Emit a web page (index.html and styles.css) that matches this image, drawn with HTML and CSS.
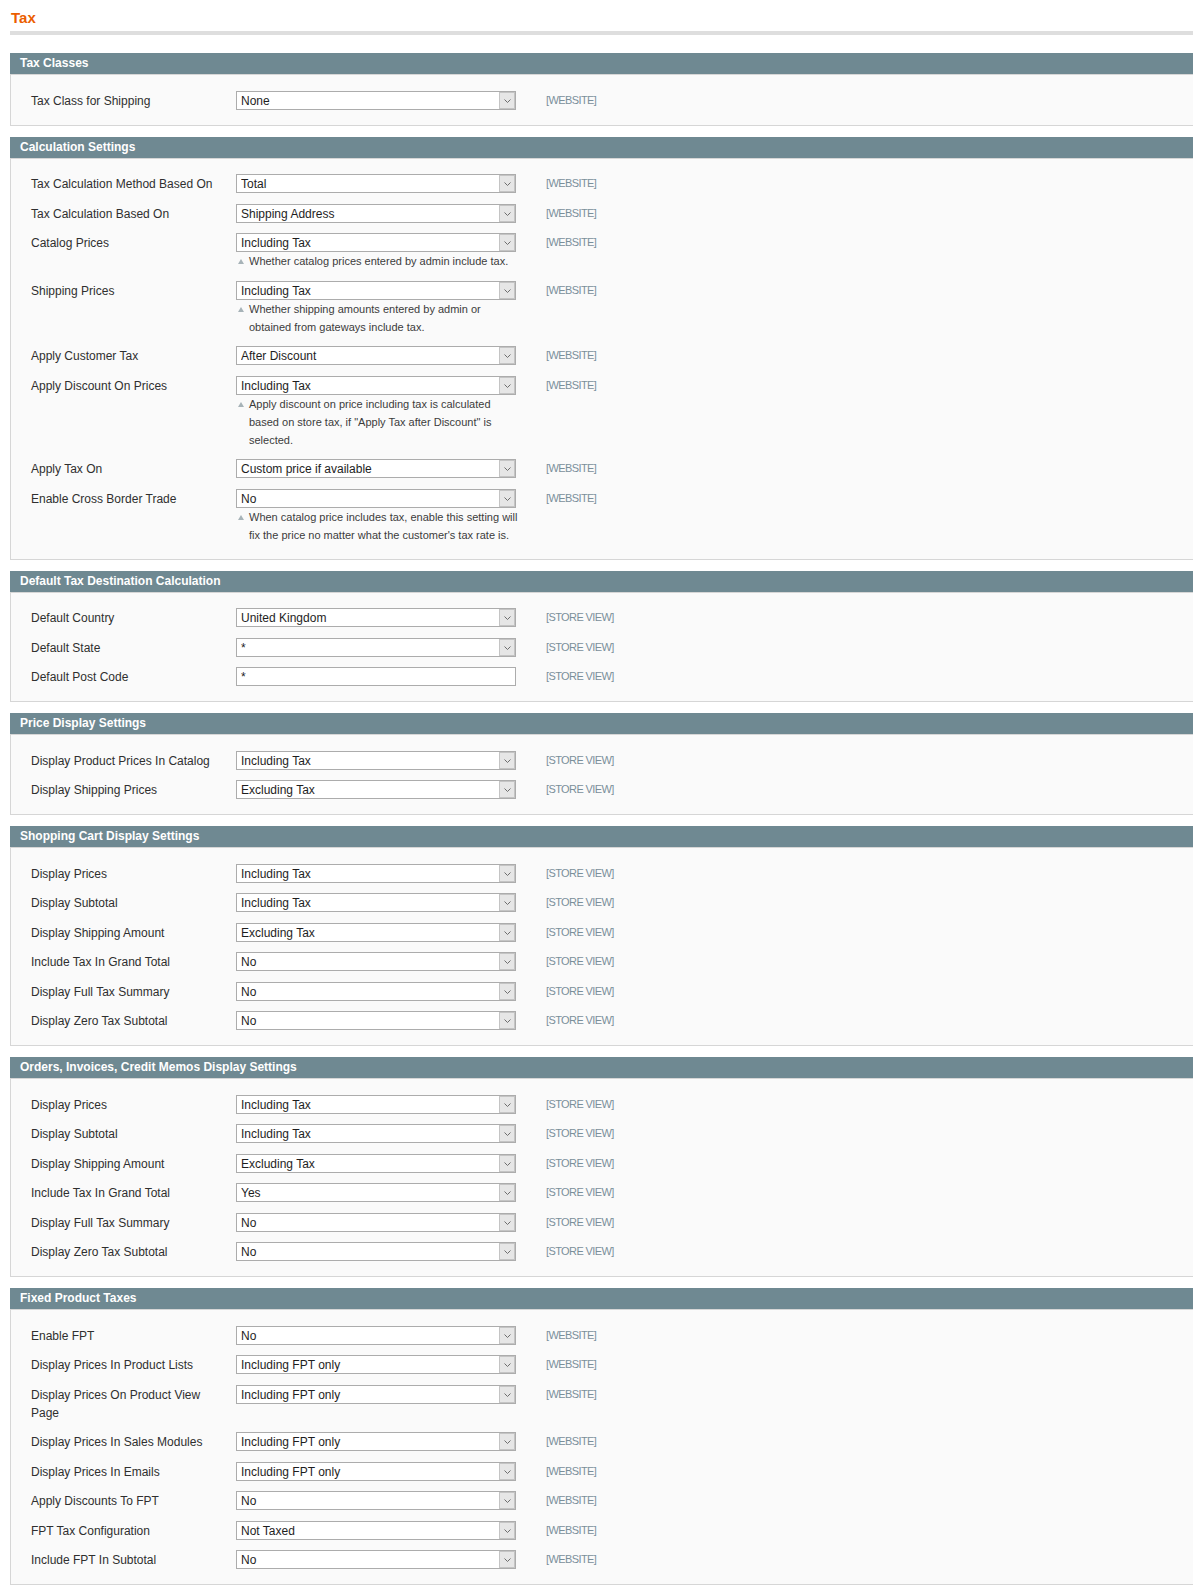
FILE: index.html
```html
<!DOCTYPE html>
<html lang="en">
  <head>
    <meta charset="UTF-8" />
    <title>Configuration / Tax</title>
    <link rel="stylesheet" href="styles.css">
  </head>
  <body>
    <div class="page">
      <h3 class="page-title">Tax</h3>
      <div class="title-rule"></div>

      <!-- Tax Classes -->
      <div class="section">
        <div class="section-head">Tax Classes</div>
        <div class="section-body">
          <div class="row">
            <label class="label">Tax Class for Shipping</label>
            <div class="value">
              <div class="select-wrap"><select><option>None</option></select><span class="arrow"><svg width="7" height="4" viewBox="0 0 7 4"><polyline points="0.5,0.5 3.5,3.5 6.5,0.5" /></svg></span></div>
            </div>
            <span class="scope">[WEBSITE]</span>
          </div>
        </div>
      </div>

      <!-- Calculation Settings -->
      <div class="section">
        <div class="section-head">Calculation Settings</div>
        <div class="section-body">
          <div class="row">
            <label class="label">Tax Calculation Method Based On</label>
            <div class="value">
              <div class="select-wrap"><select><option>Total</option></select><span class="arrow"><svg width="7" height="4" viewBox="0 0 7 4"><polyline points="0.5,0.5 3.5,3.5 6.5,0.5" /></svg></span></div>
            </div>
            <span class="scope">[WEBSITE]</span>
          </div>
          <div class="row">
            <label class="label">Tax Calculation Based On</label>
            <div class="value">
              <div class="select-wrap"><select><option>Shipping Address</option></select><span class="arrow"><svg width="7" height="4" viewBox="0 0 7 4"><polyline points="0.5,0.5 3.5,3.5 6.5,0.5" /></svg></span></div>
            </div>
            <span class="scope">[WEBSITE]</span>
          </div>
          <div class="row">
            <label class="label">Catalog Prices</label>
            <div class="value">
              <div class="select-wrap"><select><option>Including Tax</option></select><span class="arrow"><svg width="7" height="4" viewBox="0 0 7 4"><polyline points="0.5,0.5 3.5,3.5 6.5,0.5" /></svg></span></div>
              <p class="note"><span>Whether catalog prices entered by admin include tax.</span></p>
            </div>
            <span class="scope">[WEBSITE]</span>
          </div>
          <div class="row">
            <label class="label">Shipping Prices</label>
            <div class="value">
              <div class="select-wrap"><select><option>Including Tax</option></select><span class="arrow"><svg width="7" height="4" viewBox="0 0 7 4"><polyline points="0.5,0.5 3.5,3.5 6.5,0.5" /></svg></span></div>
              <p class="note"><span>Whether shipping amounts entered by admin or<br>obtained from gateways include tax.</span></p>
            </div>
            <span class="scope">[WEBSITE]</span>
          </div>
          <div class="row">
            <label class="label">Apply Customer Tax</label>
            <div class="value">
              <div class="select-wrap"><select><option>After Discount</option></select><span class="arrow"><svg width="7" height="4" viewBox="0 0 7 4"><polyline points="0.5,0.5 3.5,3.5 6.5,0.5" /></svg></span></div>
            </div>
            <span class="scope">[WEBSITE]</span>
          </div>
          <div class="row">
            <label class="label">Apply Discount On Prices</label>
            <div class="value">
              <div class="select-wrap"><select><option>Including Tax</option></select><span class="arrow"><svg width="7" height="4" viewBox="0 0 7 4"><polyline points="0.5,0.5 3.5,3.5 6.5,0.5" /></svg></span></div>
              <p class="note"><span>Apply discount on price including tax is calculated<br>based on store tax, if "Apply Tax after Discount" is<br>selected.</span></p>
            </div>
            <span class="scope">[WEBSITE]</span>
          </div>
          <div class="row">
            <label class="label">Apply Tax On</label>
            <div class="value">
              <div class="select-wrap"><select><option>Custom price if available</option></select><span class="arrow"><svg width="7" height="4" viewBox="0 0 7 4"><polyline points="0.5,0.5 3.5,3.5 6.5,0.5" /></svg></span></div>
            </div>
            <span class="scope">[WEBSITE]</span>
          </div>
          <div class="row">
            <label class="label">Enable Cross Border Trade</label>
            <div class="value">
              <div class="select-wrap"><select><option>No</option></select><span class="arrow"><svg width="7" height="4" viewBox="0 0 7 4"><polyline points="0.5,0.5 3.5,3.5 6.5,0.5" /></svg></span></div>
              <p class="note"><span>When catalog price includes tax, enable this setting will<br>fix the price no matter what the customer's tax rate is.</span></p>
            </div>
            <span class="scope">[WEBSITE]</span>
          </div>
        </div>
      </div>

      <!-- Default Tax Destination Calculation -->
      <div class="section">
        <div class="section-head">Default Tax Destination Calculation</div>
        <div class="section-body">
          <div class="row">
            <label class="label">Default Country</label>
            <div class="value">
              <div class="select-wrap"><select><option>United Kingdom</option></select><span class="arrow"><svg width="7" height="4" viewBox="0 0 7 4"><polyline points="0.5,0.5 3.5,3.5 6.5,0.5" /></svg></span></div>
            </div>
            <span class="scope">[STORE VIEW]</span>
          </div>
          <div class="row">
            <label class="label">Default State</label>
            <div class="value">
              <div class="select-wrap"><select><option>*</option></select><span class="arrow"><svg width="7" height="4" viewBox="0 0 7 4"><polyline points="0.5,0.5 3.5,3.5 6.5,0.5" /></svg></span></div>
            </div>
            <span class="scope">[STORE VIEW]</span>
          </div>
          <div class="row">
            <label class="label">Default Post Code</label>
            <div class="value">
              <input class="input-text" type="text" value="*" />
            </div>
            <span class="scope">[STORE VIEW]</span>
          </div>
        </div>
      </div>

      <!-- Price Display Settings -->
      <div class="section">
        <div class="section-head">Price Display Settings</div>
        <div class="section-body">
          <div class="row">
            <label class="label">Display Product Prices In Catalog</label>
            <div class="value">
              <div class="select-wrap"><select><option>Including Tax</option></select><span class="arrow"><svg width="7" height="4" viewBox="0 0 7 4"><polyline points="0.5,0.5 3.5,3.5 6.5,0.5" /></svg></span></div>
            </div>
            <span class="scope">[STORE VIEW]</span>
          </div>
          <div class="row">
            <label class="label">Display Shipping Prices</label>
            <div class="value">
              <div class="select-wrap"><select><option>Excluding Tax</option></select><span class="arrow"><svg width="7" height="4" viewBox="0 0 7 4"><polyline points="0.5,0.5 3.5,3.5 6.5,0.5" /></svg></span></div>
            </div>
            <span class="scope">[STORE VIEW]</span>
          </div>
        </div>
      </div>

      <!-- Shopping Cart Display Settings -->
      <div class="section">
        <div class="section-head">Shopping Cart Display Settings</div>
        <div class="section-body">
          <div class="row">
            <label class="label">Display Prices</label>
            <div class="value">
              <div class="select-wrap"><select><option>Including Tax</option></select><span class="arrow"><svg width="7" height="4" viewBox="0 0 7 4"><polyline points="0.5,0.5 3.5,3.5 6.5,0.5" /></svg></span></div>
            </div>
            <span class="scope">[STORE VIEW]</span>
          </div>
          <div class="row">
            <label class="label">Display Subtotal</label>
            <div class="value">
              <div class="select-wrap"><select><option>Including Tax</option></select><span class="arrow"><svg width="7" height="4" viewBox="0 0 7 4"><polyline points="0.5,0.5 3.5,3.5 6.5,0.5" /></svg></span></div>
            </div>
            <span class="scope">[STORE VIEW]</span>
          </div>
          <div class="row">
            <label class="label">Display Shipping Amount</label>
            <div class="value">
              <div class="select-wrap"><select><option>Excluding Tax</option></select><span class="arrow"><svg width="7" height="4" viewBox="0 0 7 4"><polyline points="0.5,0.5 3.5,3.5 6.5,0.5" /></svg></span></div>
            </div>
            <span class="scope">[STORE VIEW]</span>
          </div>
          <div class="row">
            <label class="label">Include Tax In Grand Total</label>
            <div class="value">
              <div class="select-wrap"><select><option>No</option></select><span class="arrow"><svg width="7" height="4" viewBox="0 0 7 4"><polyline points="0.5,0.5 3.5,3.5 6.5,0.5" /></svg></span></div>
            </div>
            <span class="scope">[STORE VIEW]</span>
          </div>
          <div class="row">
            <label class="label">Display Full Tax Summary</label>
            <div class="value">
              <div class="select-wrap"><select><option>No</option></select><span class="arrow"><svg width="7" height="4" viewBox="0 0 7 4"><polyline points="0.5,0.5 3.5,3.5 6.5,0.5" /></svg></span></div>
            </div>
            <span class="scope">[STORE VIEW]</span>
          </div>
          <div class="row">
            <label class="label">Display Zero Tax Subtotal</label>
            <div class="value">
              <div class="select-wrap"><select><option>No</option></select><span class="arrow"><svg width="7" height="4" viewBox="0 0 7 4"><polyline points="0.5,0.5 3.5,3.5 6.5,0.5" /></svg></span></div>
            </div>
            <span class="scope">[STORE VIEW]</span>
          </div>
        </div>
      </div>

      <!-- Orders, Invoices, Credit Memos Display Settings -->
      <div class="section">
        <div class="section-head">Orders, Invoices, Credit Memos Display Settings</div>
        <div class="section-body">
          <div class="row">
            <label class="label">Display Prices</label>
            <div class="value">
              <div class="select-wrap"><select><option>Including Tax</option></select><span class="arrow"><svg width="7" height="4" viewBox="0 0 7 4"><polyline points="0.5,0.5 3.5,3.5 6.5,0.5" /></svg></span></div>
            </div>
            <span class="scope">[STORE VIEW]</span>
          </div>
          <div class="row">
            <label class="label">Display Subtotal</label>
            <div class="value">
              <div class="select-wrap"><select><option>Including Tax</option></select><span class="arrow"><svg width="7" height="4" viewBox="0 0 7 4"><polyline points="0.5,0.5 3.5,3.5 6.5,0.5" /></svg></span></div>
            </div>
            <span class="scope">[STORE VIEW]</span>
          </div>
          <div class="row">
            <label class="label">Display Shipping Amount</label>
            <div class="value">
              <div class="select-wrap"><select><option>Excluding Tax</option></select><span class="arrow"><svg width="7" height="4" viewBox="0 0 7 4"><polyline points="0.5,0.5 3.5,3.5 6.5,0.5" /></svg></span></div>
            </div>
            <span class="scope">[STORE VIEW]</span>
          </div>
          <div class="row">
            <label class="label">Include Tax In Grand Total</label>
            <div class="value">
              <div class="select-wrap"><select><option>Yes</option></select><span class="arrow"><svg width="7" height="4" viewBox="0 0 7 4"><polyline points="0.5,0.5 3.5,3.5 6.5,0.5" /></svg></span></div>
            </div>
            <span class="scope">[STORE VIEW]</span>
          </div>
          <div class="row">
            <label class="label">Display Full Tax Summary</label>
            <div class="value">
              <div class="select-wrap"><select><option>No</option></select><span class="arrow"><svg width="7" height="4" viewBox="0 0 7 4"><polyline points="0.5,0.5 3.5,3.5 6.5,0.5" /></svg></span></div>
            </div>
            <span class="scope">[STORE VIEW]</span>
          </div>
          <div class="row">
            <label class="label">Display Zero Tax Subtotal</label>
            <div class="value">
              <div class="select-wrap"><select><option>No</option></select><span class="arrow"><svg width="7" height="4" viewBox="0 0 7 4"><polyline points="0.5,0.5 3.5,3.5 6.5,0.5" /></svg></span></div>
            </div>
            <span class="scope">[STORE VIEW]</span>
          </div>
        </div>
      </div>

      <!-- Fixed Product Taxes -->
      <div class="section">
        <div class="section-head">Fixed Product Taxes</div>
        <div class="section-body">
          <div class="row">
            <label class="label">Enable FPT</label>
            <div class="value">
              <div class="select-wrap"><select><option>No</option></select><span class="arrow"><svg width="7" height="4" viewBox="0 0 7 4"><polyline points="0.5,0.5 3.5,3.5 6.5,0.5" /></svg></span></div>
            </div>
            <span class="scope">[WEBSITE]</span>
          </div>
          <div class="row">
            <label class="label">Display Prices In Product Lists</label>
            <div class="value">
              <div class="select-wrap"><select><option>Including FPT only</option></select><span class="arrow"><svg width="7" height="4" viewBox="0 0 7 4"><polyline points="0.5,0.5 3.5,3.5 6.5,0.5" /></svg></span></div>
            </div>
            <span class="scope">[WEBSITE]</span>
          </div>
          <div class="row">
            <label class="label">Display Prices On Product View Page</label>
            <div class="value">
              <div class="select-wrap"><select><option>Including FPT only</option></select><span class="arrow"><svg width="7" height="4" viewBox="0 0 7 4"><polyline points="0.5,0.5 3.5,3.5 6.5,0.5" /></svg></span></div>
            </div>
            <span class="scope">[WEBSITE]</span>
          </div>
          <div class="row">
            <label class="label">Display Prices In Sales Modules</label>
            <div class="value">
              <div class="select-wrap"><select><option>Including FPT only</option></select><span class="arrow"><svg width="7" height="4" viewBox="0 0 7 4"><polyline points="0.5,0.5 3.5,3.5 6.5,0.5" /></svg></span></div>
            </div>
            <span class="scope">[WEBSITE]</span>
          </div>
          <div class="row">
            <label class="label">Display Prices In Emails</label>
            <div class="value">
              <div class="select-wrap"><select><option>Including FPT only</option></select><span class="arrow"><svg width="7" height="4" viewBox="0 0 7 4"><polyline points="0.5,0.5 3.5,3.5 6.5,0.5" /></svg></span></div>
            </div>
            <span class="scope">[WEBSITE]</span>
          </div>
          <div class="row">
            <label class="label">Apply Discounts To FPT</label>
            <div class="value">
              <div class="select-wrap"><select><option>No</option></select><span class="arrow"><svg width="7" height="4" viewBox="0 0 7 4"><polyline points="0.5,0.5 3.5,3.5 6.5,0.5" /></svg></span></div>
            </div>
            <span class="scope">[WEBSITE]</span>
          </div>
          <div class="row">
            <label class="label">FPT Tax Configuration</label>
            <div class="value">
              <div class="select-wrap"><select><option>Not Taxed</option></select><span class="arrow"><svg width="7" height="4" viewBox="0 0 7 4"><polyline points="0.5,0.5 3.5,3.5 6.5,0.5" /></svg></span></div>
            </div>
            <span class="scope">[WEBSITE]</span>
          </div>
          <div class="row">
            <label class="label">Include FPT In Subtotal</label>
            <div class="value">
              <div class="select-wrap"><select><option>No</option></select><span class="arrow"><svg width="7" height="4" viewBox="0 0 7 4"><polyline points="0.5,0.5 3.5,3.5 6.5,0.5" /></svg></span></div>
            </div>
            <span class="scope">[WEBSITE]</span>
          </div>
        </div>
      </div>
    </div>
  </body>
</html>
```

FILE: styles.css
```css
body {
  margin: 0;
  background: #fff;
  font-family: "Liberation Sans", Arial, sans-serif;
  font-size: 12px;
  color: #2f2f2f;
}
.page {
  padding: 8px 0 20px 10px;
}
.page-title {
  margin: 0 0 0 1px;
  font-size: 15px;
  line-height: 20px;
  font-weight: bold;
  color: #eb5e00;
}
.title-rule {
  height: 4px;
  margin-top: 3px;
  margin-bottom: 18px;
  background: #dedede;
}
.section {
  margin-bottom: 11px;
}
.section-head {
  height: 21px;
  line-height: 21px;
  padding-left: 10px;
  background: #6f8992;
  border-bottom: 1px solid #d6d6d6;
  color: #fff;
  font-weight: bold;
  font-size: 12px;
}
.section-body {
  background: #fafafa;
  border-left: 1px solid #d6d6d6;
  border-bottom: 1px solid #d6d6d6;
  padding: 10px 0 10px 20px;
}
.row {
  display: flex;
  align-items: flex-start;
  padding: 5.5px 0 5px;
}
.label {
  width: 195px;
  margin-right: 10px;
  line-height: 18px;
  padding-top: 1px;
}
.value {
  width: 280px;
  flex: none;
}
.select-wrap {
  position: relative;
  height: 19px;
}
.select-wrap select {
  display: block;
  box-sizing: border-box;
  width: 280px;
  height: 19px;
  margin: 0;
  padding: 1px 20px 0 4px;
  border: 1px solid #acacac;
  border-radius: 0;
  background: #fff;
  color: #1e1e1e;
  font-family: "Liberation Sans", Arial, sans-serif;
  font-size: 12px;
  line-height: 16px;
  -webkit-appearance: none;
  appearance: none;
}
.select-wrap .arrow {
  position: absolute;
  top: 1px;
  right: 1px;
  width: 16px;
  height: 17px;
  box-sizing: border-box;
  border: 1px solid #c4c4c4;
  background: #e6e6e6;
  display: flex;
  align-items: center;
  justify-content: center;
}
.arrow svg {
  display: block;
  margin-top: 1px;
}
.arrow polyline {
  fill: none;
  stroke: #6d6d6d;
  stroke-width: 1;
}
.input-text {
  display: block;
  box-sizing: border-box;
  width: 280px;
  height: 19px;
  margin: 0;
  padding: 1px 4px 0;
  border: 1px solid #acacac;
  background: #fff;
  color: #1e1e1e;
  font-family: "Liberation Sans", Arial, sans-serif;
  font-size: 12px;
}
.note {
  display: flex;
  margin: 0;
  font-size: 11px;
  line-height: 18px;
  color: #3c3c3c;
  white-space: nowrap;
}
.note::before {
  content: "";
  flex: none;
  width: 0;
  height: 0;
  margin: 7px 5px 0 2px;
  border-left: 3px solid transparent;
  border-right: 3px solid transparent;
  border-bottom: 5px solid #a7b3b8;
}
.scope {
  margin-left: 30px;
  font-size: 11px;
  line-height: 18px;
  letter-spacing: -0.6px;
  color: #7a8f9a;
}
```
